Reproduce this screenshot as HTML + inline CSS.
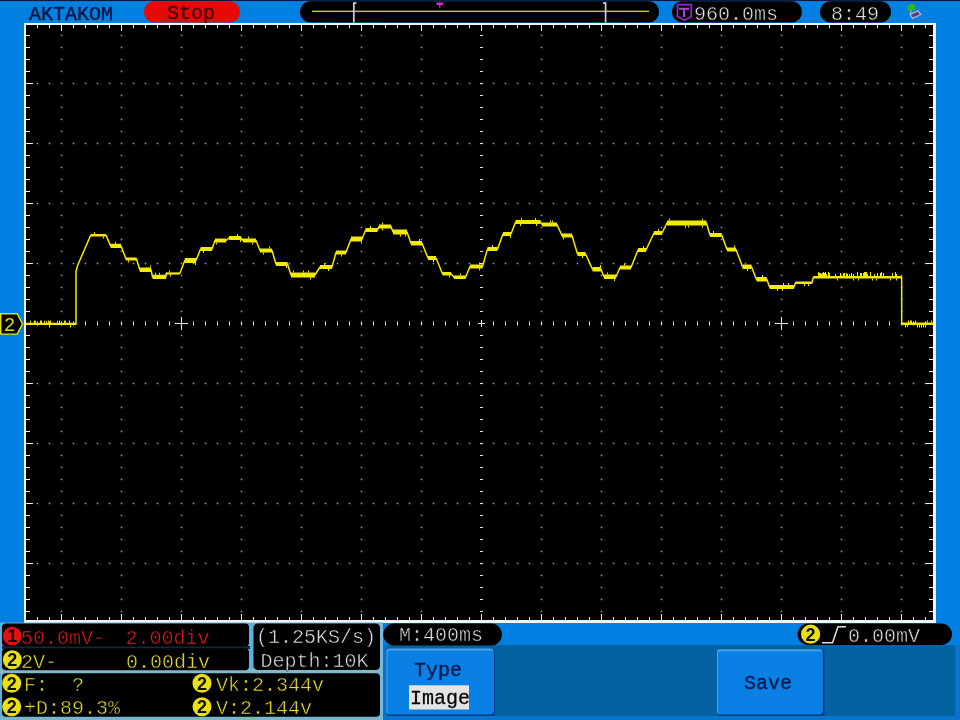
<!DOCTYPE html>
<html><head><meta charset="utf-8">
<style>
html,body{margin:0;padding:0;background:#0080e0;width:960px;height:720px;overflow:hidden}
svg{display:block;will-change:transform}
text{font-family:"Liberation Mono",monospace;font-size:20px;white-space:pre}
.n{font-family:"Liberation Sans",sans-serif;font-weight:bold;font-size:18px;text-anchor:middle;fill:#101000}
.k{stroke:#000;stroke-width:0.45}
</style></head><body>
<svg width="960" height="720" viewBox="0 0 960 720">
<rect x="0" y="0" width="960" height="720" fill="#0080e0"/>
<rect x="0" y="0" width="960" height="1.1" fill="#0a1a40"/>
<!-- top bar -->
<text x="29" y="20" fill="#04143c" stroke="#04143c" stroke-width="0.4">AKTAKOM</text>
<rect x="144" y="1.2" width="96" height="21.3" rx="10.6" fill="#e80808"/>
<text x="167" y="19" fill="#400000" stroke="#400000" stroke-width="0.4">Stop</text>
<rect x="300" y="1.2" width="359" height="21.3" rx="10.6" fill="#000"/>
<rect x="312" y="10.6" width="337" height="1.5" fill="#c4c430"/>
<path d="M353.8 22.5V3.2h2.6" fill="none" stroke="#d0cce0" stroke-width="1.7"/>
<path d="M605.6 22.5V3.2h-2.6" fill="none" stroke="#d0cce0" stroke-width="1.7"/>
<path d="M436.5 2.5h6.5v2.5h-2.5v2.5h-1.5v-2.5h-2.5z" fill="#d828d0"/>
<rect x="672" y="1.2" width="130" height="21.3" rx="10.6" fill="#000"/>
<path d="M677.5 4.6h13.8v12l-6.9 3.6l-6.9-3.6z" fill="none" stroke="#8830d0" stroke-width="1.7"/>
<path d="M679 7.8h10v1.9h-4v7.3h-2v-7.3h-4z" fill="#b040e0"/>
<text x="694" y="19.5" fill="#e4e4e4" class="k">960.0ms</text>
<rect x="820" y="1.2" width="71" height="21.3" rx="10.6" fill="#000"/>
<text x="831" y="19.5" fill="#e4e4e4" class="k">8:49</text>
<path d="M907 6.5Q909 3.5 913 4L916 6L914.5 9.5L911 11.5L908 10.5z" fill="#38b020"/>
<path d="M910.5 10.5L911.5 16" stroke="#90c8a8" stroke-width="1.2"/>
<path d="M910 14.3L918 10.8L920.8 14.5L912.5 18.3z" fill="#3a4a88" stroke="#c8a8c8" stroke-width="1.3"/>
<rect x="24" y="23" width="912" height="600" fill="#f4f4f4"/>
<rect x="26" y="25" width="907" height="595" fill="#000"/>
<path fill="#989898" d="M36.7 82.7h1.6v1.6h-1.6zM48.7 82.7h1.6v1.6h-1.6zM60.7 82.7h1.6v1.6h-1.6zM72.7 82.7h1.6v1.6h-1.6zM84.7 82.7h1.6v1.6h-1.6zM96.7 82.7h1.6v1.6h-1.6zM108.7 82.7h1.6v1.6h-1.6zM120.7 82.7h1.6v1.6h-1.6zM132.7 82.7h1.6v1.6h-1.6zM144.7 82.7h1.6v1.6h-1.6zM156.7 82.7h1.6v1.6h-1.6zM168.7 82.7h1.6v1.6h-1.6zM180.7 82.7h1.6v1.6h-1.6zM192.7 82.7h1.6v1.6h-1.6zM204.7 82.7h1.6v1.6h-1.6zM216.7 82.7h1.6v1.6h-1.6zM228.7 82.7h1.6v1.6h-1.6zM240.7 82.7h1.6v1.6h-1.6zM252.7 82.7h1.6v1.6h-1.6zM264.7 82.7h1.6v1.6h-1.6zM276.7 82.7h1.6v1.6h-1.6zM288.7 82.7h1.6v1.6h-1.6zM300.7 82.7h1.6v1.6h-1.6zM312.7 82.7h1.6v1.6h-1.6zM324.7 82.7h1.6v1.6h-1.6zM336.7 82.7h1.6v1.6h-1.6zM348.7 82.7h1.6v1.6h-1.6zM360.7 82.7h1.6v1.6h-1.6zM372.7 82.7h1.6v1.6h-1.6zM384.7 82.7h1.6v1.6h-1.6zM396.7 82.7h1.6v1.6h-1.6zM408.7 82.7h1.6v1.6h-1.6zM420.7 82.7h1.6v1.6h-1.6zM432.7 82.7h1.6v1.6h-1.6zM444.7 82.7h1.6v1.6h-1.6zM456.7 82.7h1.6v1.6h-1.6zM468.7 82.7h1.6v1.6h-1.6zM480.7 82.7h1.6v1.6h-1.6zM492.7 82.7h1.6v1.6h-1.6zM504.7 82.7h1.6v1.6h-1.6zM516.7 82.7h1.6v1.6h-1.6zM528.7 82.7h1.6v1.6h-1.6zM540.7 82.7h1.6v1.6h-1.6zM552.7 82.7h1.6v1.6h-1.6zM564.7 82.7h1.6v1.6h-1.6zM576.7 82.7h1.6v1.6h-1.6zM588.7 82.7h1.6v1.6h-1.6zM600.7 82.7h1.6v1.6h-1.6zM612.7 82.7h1.6v1.6h-1.6zM624.7 82.7h1.6v1.6h-1.6zM636.7 82.7h1.6v1.6h-1.6zM648.7 82.7h1.6v1.6h-1.6zM660.7 82.7h1.6v1.6h-1.6zM672.7 82.7h1.6v1.6h-1.6zM684.7 82.7h1.6v1.6h-1.6zM696.7 82.7h1.6v1.6h-1.6zM708.7 82.7h1.6v1.6h-1.6zM720.7 82.7h1.6v1.6h-1.6zM732.7 82.7h1.6v1.6h-1.6zM744.7 82.7h1.6v1.6h-1.6zM756.7 82.7h1.6v1.6h-1.6zM768.7 82.7h1.6v1.6h-1.6zM780.7 82.7h1.6v1.6h-1.6zM792.7 82.7h1.6v1.6h-1.6zM804.7 82.7h1.6v1.6h-1.6zM816.7 82.7h1.6v1.6h-1.6zM828.7 82.7h1.6v1.6h-1.6zM840.7 82.7h1.6v1.6h-1.6zM852.7 82.7h1.6v1.6h-1.6zM864.7 82.7h1.6v1.6h-1.6zM876.7 82.7h1.6v1.6h-1.6zM888.7 82.7h1.6v1.6h-1.6zM900.7 82.7h1.6v1.6h-1.6zM912.7 82.7h1.6v1.6h-1.6zM924.7 82.7h1.6v1.6h-1.6zM36.7 142.7h1.6v1.6h-1.6zM48.7 142.7h1.6v1.6h-1.6zM60.7 142.7h1.6v1.6h-1.6zM72.7 142.7h1.6v1.6h-1.6zM84.7 142.7h1.6v1.6h-1.6zM96.7 142.7h1.6v1.6h-1.6zM108.7 142.7h1.6v1.6h-1.6zM120.7 142.7h1.6v1.6h-1.6zM132.7 142.7h1.6v1.6h-1.6zM144.7 142.7h1.6v1.6h-1.6zM156.7 142.7h1.6v1.6h-1.6zM168.7 142.7h1.6v1.6h-1.6zM180.7 142.7h1.6v1.6h-1.6zM192.7 142.7h1.6v1.6h-1.6zM204.7 142.7h1.6v1.6h-1.6zM216.7 142.7h1.6v1.6h-1.6zM228.7 142.7h1.6v1.6h-1.6zM240.7 142.7h1.6v1.6h-1.6zM252.7 142.7h1.6v1.6h-1.6zM264.7 142.7h1.6v1.6h-1.6zM276.7 142.7h1.6v1.6h-1.6zM288.7 142.7h1.6v1.6h-1.6zM300.7 142.7h1.6v1.6h-1.6zM312.7 142.7h1.6v1.6h-1.6zM324.7 142.7h1.6v1.6h-1.6zM336.7 142.7h1.6v1.6h-1.6zM348.7 142.7h1.6v1.6h-1.6zM360.7 142.7h1.6v1.6h-1.6zM372.7 142.7h1.6v1.6h-1.6zM384.7 142.7h1.6v1.6h-1.6zM396.7 142.7h1.6v1.6h-1.6zM408.7 142.7h1.6v1.6h-1.6zM420.7 142.7h1.6v1.6h-1.6zM432.7 142.7h1.6v1.6h-1.6zM444.7 142.7h1.6v1.6h-1.6zM456.7 142.7h1.6v1.6h-1.6zM468.7 142.7h1.6v1.6h-1.6zM480.7 142.7h1.6v1.6h-1.6zM492.7 142.7h1.6v1.6h-1.6zM504.7 142.7h1.6v1.6h-1.6zM516.7 142.7h1.6v1.6h-1.6zM528.7 142.7h1.6v1.6h-1.6zM540.7 142.7h1.6v1.6h-1.6zM552.7 142.7h1.6v1.6h-1.6zM564.7 142.7h1.6v1.6h-1.6zM576.7 142.7h1.6v1.6h-1.6zM588.7 142.7h1.6v1.6h-1.6zM600.7 142.7h1.6v1.6h-1.6zM612.7 142.7h1.6v1.6h-1.6zM624.7 142.7h1.6v1.6h-1.6zM636.7 142.7h1.6v1.6h-1.6zM648.7 142.7h1.6v1.6h-1.6zM660.7 142.7h1.6v1.6h-1.6zM672.7 142.7h1.6v1.6h-1.6zM684.7 142.7h1.6v1.6h-1.6zM696.7 142.7h1.6v1.6h-1.6zM708.7 142.7h1.6v1.6h-1.6zM720.7 142.7h1.6v1.6h-1.6zM732.7 142.7h1.6v1.6h-1.6zM744.7 142.7h1.6v1.6h-1.6zM756.7 142.7h1.6v1.6h-1.6zM768.7 142.7h1.6v1.6h-1.6zM780.7 142.7h1.6v1.6h-1.6zM792.7 142.7h1.6v1.6h-1.6zM804.7 142.7h1.6v1.6h-1.6zM816.7 142.7h1.6v1.6h-1.6zM828.7 142.7h1.6v1.6h-1.6zM840.7 142.7h1.6v1.6h-1.6zM852.7 142.7h1.6v1.6h-1.6zM864.7 142.7h1.6v1.6h-1.6zM876.7 142.7h1.6v1.6h-1.6zM888.7 142.7h1.6v1.6h-1.6zM900.7 142.7h1.6v1.6h-1.6zM912.7 142.7h1.6v1.6h-1.6zM924.7 142.7h1.6v1.6h-1.6zM36.7 202.7h1.6v1.6h-1.6zM48.7 202.7h1.6v1.6h-1.6zM60.7 202.7h1.6v1.6h-1.6zM72.7 202.7h1.6v1.6h-1.6zM84.7 202.7h1.6v1.6h-1.6zM96.7 202.7h1.6v1.6h-1.6zM108.7 202.7h1.6v1.6h-1.6zM120.7 202.7h1.6v1.6h-1.6zM132.7 202.7h1.6v1.6h-1.6zM144.7 202.7h1.6v1.6h-1.6zM156.7 202.7h1.6v1.6h-1.6zM168.7 202.7h1.6v1.6h-1.6zM180.7 202.7h1.6v1.6h-1.6zM192.7 202.7h1.6v1.6h-1.6zM204.7 202.7h1.6v1.6h-1.6zM216.7 202.7h1.6v1.6h-1.6zM228.7 202.7h1.6v1.6h-1.6zM240.7 202.7h1.6v1.6h-1.6zM252.7 202.7h1.6v1.6h-1.6zM264.7 202.7h1.6v1.6h-1.6zM276.7 202.7h1.6v1.6h-1.6zM288.7 202.7h1.6v1.6h-1.6zM300.7 202.7h1.6v1.6h-1.6zM312.7 202.7h1.6v1.6h-1.6zM324.7 202.7h1.6v1.6h-1.6zM336.7 202.7h1.6v1.6h-1.6zM348.7 202.7h1.6v1.6h-1.6zM360.7 202.7h1.6v1.6h-1.6zM372.7 202.7h1.6v1.6h-1.6zM384.7 202.7h1.6v1.6h-1.6zM396.7 202.7h1.6v1.6h-1.6zM408.7 202.7h1.6v1.6h-1.6zM420.7 202.7h1.6v1.6h-1.6zM432.7 202.7h1.6v1.6h-1.6zM444.7 202.7h1.6v1.6h-1.6zM456.7 202.7h1.6v1.6h-1.6zM468.7 202.7h1.6v1.6h-1.6zM480.7 202.7h1.6v1.6h-1.6zM492.7 202.7h1.6v1.6h-1.6zM504.7 202.7h1.6v1.6h-1.6zM516.7 202.7h1.6v1.6h-1.6zM528.7 202.7h1.6v1.6h-1.6zM540.7 202.7h1.6v1.6h-1.6zM552.7 202.7h1.6v1.6h-1.6zM564.7 202.7h1.6v1.6h-1.6zM576.7 202.7h1.6v1.6h-1.6zM588.7 202.7h1.6v1.6h-1.6zM600.7 202.7h1.6v1.6h-1.6zM612.7 202.7h1.6v1.6h-1.6zM624.7 202.7h1.6v1.6h-1.6zM636.7 202.7h1.6v1.6h-1.6zM648.7 202.7h1.6v1.6h-1.6zM660.7 202.7h1.6v1.6h-1.6zM672.7 202.7h1.6v1.6h-1.6zM684.7 202.7h1.6v1.6h-1.6zM696.7 202.7h1.6v1.6h-1.6zM708.7 202.7h1.6v1.6h-1.6zM720.7 202.7h1.6v1.6h-1.6zM732.7 202.7h1.6v1.6h-1.6zM744.7 202.7h1.6v1.6h-1.6zM756.7 202.7h1.6v1.6h-1.6zM768.7 202.7h1.6v1.6h-1.6zM780.7 202.7h1.6v1.6h-1.6zM792.7 202.7h1.6v1.6h-1.6zM804.7 202.7h1.6v1.6h-1.6zM816.7 202.7h1.6v1.6h-1.6zM828.7 202.7h1.6v1.6h-1.6zM840.7 202.7h1.6v1.6h-1.6zM852.7 202.7h1.6v1.6h-1.6zM864.7 202.7h1.6v1.6h-1.6zM876.7 202.7h1.6v1.6h-1.6zM888.7 202.7h1.6v1.6h-1.6zM900.7 202.7h1.6v1.6h-1.6zM912.7 202.7h1.6v1.6h-1.6zM924.7 202.7h1.6v1.6h-1.6zM36.7 262.7h1.6v1.6h-1.6zM48.7 262.7h1.6v1.6h-1.6zM60.7 262.7h1.6v1.6h-1.6zM72.7 262.7h1.6v1.6h-1.6zM84.7 262.7h1.6v1.6h-1.6zM96.7 262.7h1.6v1.6h-1.6zM108.7 262.7h1.6v1.6h-1.6zM120.7 262.7h1.6v1.6h-1.6zM132.7 262.7h1.6v1.6h-1.6zM144.7 262.7h1.6v1.6h-1.6zM156.7 262.7h1.6v1.6h-1.6zM168.7 262.7h1.6v1.6h-1.6zM180.7 262.7h1.6v1.6h-1.6zM192.7 262.7h1.6v1.6h-1.6zM204.7 262.7h1.6v1.6h-1.6zM216.7 262.7h1.6v1.6h-1.6zM228.7 262.7h1.6v1.6h-1.6zM240.7 262.7h1.6v1.6h-1.6zM252.7 262.7h1.6v1.6h-1.6zM264.7 262.7h1.6v1.6h-1.6zM276.7 262.7h1.6v1.6h-1.6zM288.7 262.7h1.6v1.6h-1.6zM300.7 262.7h1.6v1.6h-1.6zM312.7 262.7h1.6v1.6h-1.6zM324.7 262.7h1.6v1.6h-1.6zM336.7 262.7h1.6v1.6h-1.6zM348.7 262.7h1.6v1.6h-1.6zM360.7 262.7h1.6v1.6h-1.6zM372.7 262.7h1.6v1.6h-1.6zM384.7 262.7h1.6v1.6h-1.6zM396.7 262.7h1.6v1.6h-1.6zM408.7 262.7h1.6v1.6h-1.6zM420.7 262.7h1.6v1.6h-1.6zM432.7 262.7h1.6v1.6h-1.6zM444.7 262.7h1.6v1.6h-1.6zM456.7 262.7h1.6v1.6h-1.6zM468.7 262.7h1.6v1.6h-1.6zM480.7 262.7h1.6v1.6h-1.6zM492.7 262.7h1.6v1.6h-1.6zM504.7 262.7h1.6v1.6h-1.6zM516.7 262.7h1.6v1.6h-1.6zM528.7 262.7h1.6v1.6h-1.6zM540.7 262.7h1.6v1.6h-1.6zM552.7 262.7h1.6v1.6h-1.6zM564.7 262.7h1.6v1.6h-1.6zM576.7 262.7h1.6v1.6h-1.6zM588.7 262.7h1.6v1.6h-1.6zM600.7 262.7h1.6v1.6h-1.6zM612.7 262.7h1.6v1.6h-1.6zM624.7 262.7h1.6v1.6h-1.6zM636.7 262.7h1.6v1.6h-1.6zM648.7 262.7h1.6v1.6h-1.6zM660.7 262.7h1.6v1.6h-1.6zM672.7 262.7h1.6v1.6h-1.6zM684.7 262.7h1.6v1.6h-1.6zM696.7 262.7h1.6v1.6h-1.6zM708.7 262.7h1.6v1.6h-1.6zM720.7 262.7h1.6v1.6h-1.6zM732.7 262.7h1.6v1.6h-1.6zM744.7 262.7h1.6v1.6h-1.6zM756.7 262.7h1.6v1.6h-1.6zM768.7 262.7h1.6v1.6h-1.6zM780.7 262.7h1.6v1.6h-1.6zM792.7 262.7h1.6v1.6h-1.6zM804.7 262.7h1.6v1.6h-1.6zM816.7 262.7h1.6v1.6h-1.6zM828.7 262.7h1.6v1.6h-1.6zM840.7 262.7h1.6v1.6h-1.6zM852.7 262.7h1.6v1.6h-1.6zM864.7 262.7h1.6v1.6h-1.6zM876.7 262.7h1.6v1.6h-1.6zM888.7 262.7h1.6v1.6h-1.6zM900.7 262.7h1.6v1.6h-1.6zM912.7 262.7h1.6v1.6h-1.6zM924.7 262.7h1.6v1.6h-1.6zM36.7 382.7h1.6v1.6h-1.6zM48.7 382.7h1.6v1.6h-1.6zM60.7 382.7h1.6v1.6h-1.6zM72.7 382.7h1.6v1.6h-1.6zM84.7 382.7h1.6v1.6h-1.6zM96.7 382.7h1.6v1.6h-1.6zM108.7 382.7h1.6v1.6h-1.6zM120.7 382.7h1.6v1.6h-1.6zM132.7 382.7h1.6v1.6h-1.6zM144.7 382.7h1.6v1.6h-1.6zM156.7 382.7h1.6v1.6h-1.6zM168.7 382.7h1.6v1.6h-1.6zM180.7 382.7h1.6v1.6h-1.6zM192.7 382.7h1.6v1.6h-1.6zM204.7 382.7h1.6v1.6h-1.6zM216.7 382.7h1.6v1.6h-1.6zM228.7 382.7h1.6v1.6h-1.6zM240.7 382.7h1.6v1.6h-1.6zM252.7 382.7h1.6v1.6h-1.6zM264.7 382.7h1.6v1.6h-1.6zM276.7 382.7h1.6v1.6h-1.6zM288.7 382.7h1.6v1.6h-1.6zM300.7 382.7h1.6v1.6h-1.6zM312.7 382.7h1.6v1.6h-1.6zM324.7 382.7h1.6v1.6h-1.6zM336.7 382.7h1.6v1.6h-1.6zM348.7 382.7h1.6v1.6h-1.6zM360.7 382.7h1.6v1.6h-1.6zM372.7 382.7h1.6v1.6h-1.6zM384.7 382.7h1.6v1.6h-1.6zM396.7 382.7h1.6v1.6h-1.6zM408.7 382.7h1.6v1.6h-1.6zM420.7 382.7h1.6v1.6h-1.6zM432.7 382.7h1.6v1.6h-1.6zM444.7 382.7h1.6v1.6h-1.6zM456.7 382.7h1.6v1.6h-1.6zM468.7 382.7h1.6v1.6h-1.6zM480.7 382.7h1.6v1.6h-1.6zM492.7 382.7h1.6v1.6h-1.6zM504.7 382.7h1.6v1.6h-1.6zM516.7 382.7h1.6v1.6h-1.6zM528.7 382.7h1.6v1.6h-1.6zM540.7 382.7h1.6v1.6h-1.6zM552.7 382.7h1.6v1.6h-1.6zM564.7 382.7h1.6v1.6h-1.6zM576.7 382.7h1.6v1.6h-1.6zM588.7 382.7h1.6v1.6h-1.6zM600.7 382.7h1.6v1.6h-1.6zM612.7 382.7h1.6v1.6h-1.6zM624.7 382.7h1.6v1.6h-1.6zM636.7 382.7h1.6v1.6h-1.6zM648.7 382.7h1.6v1.6h-1.6zM660.7 382.7h1.6v1.6h-1.6zM672.7 382.7h1.6v1.6h-1.6zM684.7 382.7h1.6v1.6h-1.6zM696.7 382.7h1.6v1.6h-1.6zM708.7 382.7h1.6v1.6h-1.6zM720.7 382.7h1.6v1.6h-1.6zM732.7 382.7h1.6v1.6h-1.6zM744.7 382.7h1.6v1.6h-1.6zM756.7 382.7h1.6v1.6h-1.6zM768.7 382.7h1.6v1.6h-1.6zM780.7 382.7h1.6v1.6h-1.6zM792.7 382.7h1.6v1.6h-1.6zM804.7 382.7h1.6v1.6h-1.6zM816.7 382.7h1.6v1.6h-1.6zM828.7 382.7h1.6v1.6h-1.6zM840.7 382.7h1.6v1.6h-1.6zM852.7 382.7h1.6v1.6h-1.6zM864.7 382.7h1.6v1.6h-1.6zM876.7 382.7h1.6v1.6h-1.6zM888.7 382.7h1.6v1.6h-1.6zM900.7 382.7h1.6v1.6h-1.6zM912.7 382.7h1.6v1.6h-1.6zM924.7 382.7h1.6v1.6h-1.6zM36.7 442.7h1.6v1.6h-1.6zM48.7 442.7h1.6v1.6h-1.6zM60.7 442.7h1.6v1.6h-1.6zM72.7 442.7h1.6v1.6h-1.6zM84.7 442.7h1.6v1.6h-1.6zM96.7 442.7h1.6v1.6h-1.6zM108.7 442.7h1.6v1.6h-1.6zM120.7 442.7h1.6v1.6h-1.6zM132.7 442.7h1.6v1.6h-1.6zM144.7 442.7h1.6v1.6h-1.6zM156.7 442.7h1.6v1.6h-1.6zM168.7 442.7h1.6v1.6h-1.6zM180.7 442.7h1.6v1.6h-1.6zM192.7 442.7h1.6v1.6h-1.6zM204.7 442.7h1.6v1.6h-1.6zM216.7 442.7h1.6v1.6h-1.6zM228.7 442.7h1.6v1.6h-1.6zM240.7 442.7h1.6v1.6h-1.6zM252.7 442.7h1.6v1.6h-1.6zM264.7 442.7h1.6v1.6h-1.6zM276.7 442.7h1.6v1.6h-1.6zM288.7 442.7h1.6v1.6h-1.6zM300.7 442.7h1.6v1.6h-1.6zM312.7 442.7h1.6v1.6h-1.6zM324.7 442.7h1.6v1.6h-1.6zM336.7 442.7h1.6v1.6h-1.6zM348.7 442.7h1.6v1.6h-1.6zM360.7 442.7h1.6v1.6h-1.6zM372.7 442.7h1.6v1.6h-1.6zM384.7 442.7h1.6v1.6h-1.6zM396.7 442.7h1.6v1.6h-1.6zM408.7 442.7h1.6v1.6h-1.6zM420.7 442.7h1.6v1.6h-1.6zM432.7 442.7h1.6v1.6h-1.6zM444.7 442.7h1.6v1.6h-1.6zM456.7 442.7h1.6v1.6h-1.6zM468.7 442.7h1.6v1.6h-1.6zM480.7 442.7h1.6v1.6h-1.6zM492.7 442.7h1.6v1.6h-1.6zM504.7 442.7h1.6v1.6h-1.6zM516.7 442.7h1.6v1.6h-1.6zM528.7 442.7h1.6v1.6h-1.6zM540.7 442.7h1.6v1.6h-1.6zM552.7 442.7h1.6v1.6h-1.6zM564.7 442.7h1.6v1.6h-1.6zM576.7 442.7h1.6v1.6h-1.6zM588.7 442.7h1.6v1.6h-1.6zM600.7 442.7h1.6v1.6h-1.6zM612.7 442.7h1.6v1.6h-1.6zM624.7 442.7h1.6v1.6h-1.6zM636.7 442.7h1.6v1.6h-1.6zM648.7 442.7h1.6v1.6h-1.6zM660.7 442.7h1.6v1.6h-1.6zM672.7 442.7h1.6v1.6h-1.6zM684.7 442.7h1.6v1.6h-1.6zM696.7 442.7h1.6v1.6h-1.6zM708.7 442.7h1.6v1.6h-1.6zM720.7 442.7h1.6v1.6h-1.6zM732.7 442.7h1.6v1.6h-1.6zM744.7 442.7h1.6v1.6h-1.6zM756.7 442.7h1.6v1.6h-1.6zM768.7 442.7h1.6v1.6h-1.6zM780.7 442.7h1.6v1.6h-1.6zM792.7 442.7h1.6v1.6h-1.6zM804.7 442.7h1.6v1.6h-1.6zM816.7 442.7h1.6v1.6h-1.6zM828.7 442.7h1.6v1.6h-1.6zM840.7 442.7h1.6v1.6h-1.6zM852.7 442.7h1.6v1.6h-1.6zM864.7 442.7h1.6v1.6h-1.6zM876.7 442.7h1.6v1.6h-1.6zM888.7 442.7h1.6v1.6h-1.6zM900.7 442.7h1.6v1.6h-1.6zM912.7 442.7h1.6v1.6h-1.6zM924.7 442.7h1.6v1.6h-1.6zM36.7 502.7h1.6v1.6h-1.6zM48.7 502.7h1.6v1.6h-1.6zM60.7 502.7h1.6v1.6h-1.6zM72.7 502.7h1.6v1.6h-1.6zM84.7 502.7h1.6v1.6h-1.6zM96.7 502.7h1.6v1.6h-1.6zM108.7 502.7h1.6v1.6h-1.6zM120.7 502.7h1.6v1.6h-1.6zM132.7 502.7h1.6v1.6h-1.6zM144.7 502.7h1.6v1.6h-1.6zM156.7 502.7h1.6v1.6h-1.6zM168.7 502.7h1.6v1.6h-1.6zM180.7 502.7h1.6v1.6h-1.6zM192.7 502.7h1.6v1.6h-1.6zM204.7 502.7h1.6v1.6h-1.6zM216.7 502.7h1.6v1.6h-1.6zM228.7 502.7h1.6v1.6h-1.6zM240.7 502.7h1.6v1.6h-1.6zM252.7 502.7h1.6v1.6h-1.6zM264.7 502.7h1.6v1.6h-1.6zM276.7 502.7h1.6v1.6h-1.6zM288.7 502.7h1.6v1.6h-1.6zM300.7 502.7h1.6v1.6h-1.6zM312.7 502.7h1.6v1.6h-1.6zM324.7 502.7h1.6v1.6h-1.6zM336.7 502.7h1.6v1.6h-1.6zM348.7 502.7h1.6v1.6h-1.6zM360.7 502.7h1.6v1.6h-1.6zM372.7 502.7h1.6v1.6h-1.6zM384.7 502.7h1.6v1.6h-1.6zM396.7 502.7h1.6v1.6h-1.6zM408.7 502.7h1.6v1.6h-1.6zM420.7 502.7h1.6v1.6h-1.6zM432.7 502.7h1.6v1.6h-1.6zM444.7 502.7h1.6v1.6h-1.6zM456.7 502.7h1.6v1.6h-1.6zM468.7 502.7h1.6v1.6h-1.6zM480.7 502.7h1.6v1.6h-1.6zM492.7 502.7h1.6v1.6h-1.6zM504.7 502.7h1.6v1.6h-1.6zM516.7 502.7h1.6v1.6h-1.6zM528.7 502.7h1.6v1.6h-1.6zM540.7 502.7h1.6v1.6h-1.6zM552.7 502.7h1.6v1.6h-1.6zM564.7 502.7h1.6v1.6h-1.6zM576.7 502.7h1.6v1.6h-1.6zM588.7 502.7h1.6v1.6h-1.6zM600.7 502.7h1.6v1.6h-1.6zM612.7 502.7h1.6v1.6h-1.6zM624.7 502.7h1.6v1.6h-1.6zM636.7 502.7h1.6v1.6h-1.6zM648.7 502.7h1.6v1.6h-1.6zM660.7 502.7h1.6v1.6h-1.6zM672.7 502.7h1.6v1.6h-1.6zM684.7 502.7h1.6v1.6h-1.6zM696.7 502.7h1.6v1.6h-1.6zM708.7 502.7h1.6v1.6h-1.6zM720.7 502.7h1.6v1.6h-1.6zM732.7 502.7h1.6v1.6h-1.6zM744.7 502.7h1.6v1.6h-1.6zM756.7 502.7h1.6v1.6h-1.6zM768.7 502.7h1.6v1.6h-1.6zM780.7 502.7h1.6v1.6h-1.6zM792.7 502.7h1.6v1.6h-1.6zM804.7 502.7h1.6v1.6h-1.6zM816.7 502.7h1.6v1.6h-1.6zM828.7 502.7h1.6v1.6h-1.6zM840.7 502.7h1.6v1.6h-1.6zM852.7 502.7h1.6v1.6h-1.6zM864.7 502.7h1.6v1.6h-1.6zM876.7 502.7h1.6v1.6h-1.6zM888.7 502.7h1.6v1.6h-1.6zM900.7 502.7h1.6v1.6h-1.6zM912.7 502.7h1.6v1.6h-1.6zM924.7 502.7h1.6v1.6h-1.6zM36.7 562.7h1.6v1.6h-1.6zM48.7 562.7h1.6v1.6h-1.6zM60.7 562.7h1.6v1.6h-1.6zM72.7 562.7h1.6v1.6h-1.6zM84.7 562.7h1.6v1.6h-1.6zM96.7 562.7h1.6v1.6h-1.6zM108.7 562.7h1.6v1.6h-1.6zM120.7 562.7h1.6v1.6h-1.6zM132.7 562.7h1.6v1.6h-1.6zM144.7 562.7h1.6v1.6h-1.6zM156.7 562.7h1.6v1.6h-1.6zM168.7 562.7h1.6v1.6h-1.6zM180.7 562.7h1.6v1.6h-1.6zM192.7 562.7h1.6v1.6h-1.6zM204.7 562.7h1.6v1.6h-1.6zM216.7 562.7h1.6v1.6h-1.6zM228.7 562.7h1.6v1.6h-1.6zM240.7 562.7h1.6v1.6h-1.6zM252.7 562.7h1.6v1.6h-1.6zM264.7 562.7h1.6v1.6h-1.6zM276.7 562.7h1.6v1.6h-1.6zM288.7 562.7h1.6v1.6h-1.6zM300.7 562.7h1.6v1.6h-1.6zM312.7 562.7h1.6v1.6h-1.6zM324.7 562.7h1.6v1.6h-1.6zM336.7 562.7h1.6v1.6h-1.6zM348.7 562.7h1.6v1.6h-1.6zM360.7 562.7h1.6v1.6h-1.6zM372.7 562.7h1.6v1.6h-1.6zM384.7 562.7h1.6v1.6h-1.6zM396.7 562.7h1.6v1.6h-1.6zM408.7 562.7h1.6v1.6h-1.6zM420.7 562.7h1.6v1.6h-1.6zM432.7 562.7h1.6v1.6h-1.6zM444.7 562.7h1.6v1.6h-1.6zM456.7 562.7h1.6v1.6h-1.6zM468.7 562.7h1.6v1.6h-1.6zM480.7 562.7h1.6v1.6h-1.6zM492.7 562.7h1.6v1.6h-1.6zM504.7 562.7h1.6v1.6h-1.6zM516.7 562.7h1.6v1.6h-1.6zM528.7 562.7h1.6v1.6h-1.6zM540.7 562.7h1.6v1.6h-1.6zM552.7 562.7h1.6v1.6h-1.6zM564.7 562.7h1.6v1.6h-1.6zM576.7 562.7h1.6v1.6h-1.6zM588.7 562.7h1.6v1.6h-1.6zM600.7 562.7h1.6v1.6h-1.6zM612.7 562.7h1.6v1.6h-1.6zM624.7 562.7h1.6v1.6h-1.6zM636.7 562.7h1.6v1.6h-1.6zM648.7 562.7h1.6v1.6h-1.6zM660.7 562.7h1.6v1.6h-1.6zM672.7 562.7h1.6v1.6h-1.6zM684.7 562.7h1.6v1.6h-1.6zM696.7 562.7h1.6v1.6h-1.6zM708.7 562.7h1.6v1.6h-1.6zM720.7 562.7h1.6v1.6h-1.6zM732.7 562.7h1.6v1.6h-1.6zM744.7 562.7h1.6v1.6h-1.6zM756.7 562.7h1.6v1.6h-1.6zM768.7 562.7h1.6v1.6h-1.6zM780.7 562.7h1.6v1.6h-1.6zM792.7 562.7h1.6v1.6h-1.6zM804.7 562.7h1.6v1.6h-1.6zM816.7 562.7h1.6v1.6h-1.6zM828.7 562.7h1.6v1.6h-1.6zM840.7 562.7h1.6v1.6h-1.6zM852.7 562.7h1.6v1.6h-1.6zM864.7 562.7h1.6v1.6h-1.6zM876.7 562.7h1.6v1.6h-1.6zM888.7 562.7h1.6v1.6h-1.6zM900.7 562.7h1.6v1.6h-1.6zM912.7 562.7h1.6v1.6h-1.6zM924.7 562.7h1.6v1.6h-1.6zM60.7 34.7h1.6v1.6h-1.6zM60.7 46.7h1.6v1.6h-1.6zM60.7 58.7h1.6v1.6h-1.6zM60.7 70.7h1.6v1.6h-1.6zM60.7 82.7h1.6v1.6h-1.6zM60.7 94.7h1.6v1.6h-1.6zM60.7 106.7h1.6v1.6h-1.6zM60.7 118.7h1.6v1.6h-1.6zM60.7 130.7h1.6v1.6h-1.6zM60.7 142.7h1.6v1.6h-1.6zM60.7 154.7h1.6v1.6h-1.6zM60.7 166.7h1.6v1.6h-1.6zM60.7 178.7h1.6v1.6h-1.6zM60.7 190.7h1.6v1.6h-1.6zM60.7 202.7h1.6v1.6h-1.6zM60.7 214.7h1.6v1.6h-1.6zM60.7 226.7h1.6v1.6h-1.6zM60.7 238.7h1.6v1.6h-1.6zM60.7 250.7h1.6v1.6h-1.6zM60.7 262.7h1.6v1.6h-1.6zM60.7 274.7h1.6v1.6h-1.6zM60.7 286.7h1.6v1.6h-1.6zM60.7 298.7h1.6v1.6h-1.6zM60.7 310.7h1.6v1.6h-1.6zM60.7 322.7h1.6v1.6h-1.6zM60.7 334.7h1.6v1.6h-1.6zM60.7 346.7h1.6v1.6h-1.6zM60.7 358.7h1.6v1.6h-1.6zM60.7 370.7h1.6v1.6h-1.6zM60.7 382.7h1.6v1.6h-1.6zM60.7 394.7h1.6v1.6h-1.6zM60.7 406.7h1.6v1.6h-1.6zM60.7 418.7h1.6v1.6h-1.6zM60.7 430.7h1.6v1.6h-1.6zM60.7 442.7h1.6v1.6h-1.6zM60.7 454.7h1.6v1.6h-1.6zM60.7 466.7h1.6v1.6h-1.6zM60.7 478.7h1.6v1.6h-1.6zM60.7 490.7h1.6v1.6h-1.6zM60.7 502.7h1.6v1.6h-1.6zM60.7 514.7h1.6v1.6h-1.6zM60.7 526.7h1.6v1.6h-1.6zM60.7 538.7h1.6v1.6h-1.6zM60.7 550.7h1.6v1.6h-1.6zM60.7 562.7h1.6v1.6h-1.6zM60.7 574.7h1.6v1.6h-1.6zM60.7 586.7h1.6v1.6h-1.6zM60.7 598.7h1.6v1.6h-1.6zM60.7 610.7h1.6v1.6h-1.6zM120.7 34.7h1.6v1.6h-1.6zM120.7 46.7h1.6v1.6h-1.6zM120.7 58.7h1.6v1.6h-1.6zM120.7 70.7h1.6v1.6h-1.6zM120.7 82.7h1.6v1.6h-1.6zM120.7 94.7h1.6v1.6h-1.6zM120.7 106.7h1.6v1.6h-1.6zM120.7 118.7h1.6v1.6h-1.6zM120.7 130.7h1.6v1.6h-1.6zM120.7 142.7h1.6v1.6h-1.6zM120.7 154.7h1.6v1.6h-1.6zM120.7 166.7h1.6v1.6h-1.6zM120.7 178.7h1.6v1.6h-1.6zM120.7 190.7h1.6v1.6h-1.6zM120.7 202.7h1.6v1.6h-1.6zM120.7 214.7h1.6v1.6h-1.6zM120.7 226.7h1.6v1.6h-1.6zM120.7 238.7h1.6v1.6h-1.6zM120.7 250.7h1.6v1.6h-1.6zM120.7 262.7h1.6v1.6h-1.6zM120.7 274.7h1.6v1.6h-1.6zM120.7 286.7h1.6v1.6h-1.6zM120.7 298.7h1.6v1.6h-1.6zM120.7 310.7h1.6v1.6h-1.6zM120.7 322.7h1.6v1.6h-1.6zM120.7 334.7h1.6v1.6h-1.6zM120.7 346.7h1.6v1.6h-1.6zM120.7 358.7h1.6v1.6h-1.6zM120.7 370.7h1.6v1.6h-1.6zM120.7 382.7h1.6v1.6h-1.6zM120.7 394.7h1.6v1.6h-1.6zM120.7 406.7h1.6v1.6h-1.6zM120.7 418.7h1.6v1.6h-1.6zM120.7 430.7h1.6v1.6h-1.6zM120.7 442.7h1.6v1.6h-1.6zM120.7 454.7h1.6v1.6h-1.6zM120.7 466.7h1.6v1.6h-1.6zM120.7 478.7h1.6v1.6h-1.6zM120.7 490.7h1.6v1.6h-1.6zM120.7 502.7h1.6v1.6h-1.6zM120.7 514.7h1.6v1.6h-1.6zM120.7 526.7h1.6v1.6h-1.6zM120.7 538.7h1.6v1.6h-1.6zM120.7 550.7h1.6v1.6h-1.6zM120.7 562.7h1.6v1.6h-1.6zM120.7 574.7h1.6v1.6h-1.6zM120.7 586.7h1.6v1.6h-1.6zM120.7 598.7h1.6v1.6h-1.6zM120.7 610.7h1.6v1.6h-1.6zM180.7 34.7h1.6v1.6h-1.6zM180.7 46.7h1.6v1.6h-1.6zM180.7 58.7h1.6v1.6h-1.6zM180.7 70.7h1.6v1.6h-1.6zM180.7 82.7h1.6v1.6h-1.6zM180.7 94.7h1.6v1.6h-1.6zM180.7 106.7h1.6v1.6h-1.6zM180.7 118.7h1.6v1.6h-1.6zM180.7 130.7h1.6v1.6h-1.6zM180.7 142.7h1.6v1.6h-1.6zM180.7 154.7h1.6v1.6h-1.6zM180.7 166.7h1.6v1.6h-1.6zM180.7 178.7h1.6v1.6h-1.6zM180.7 190.7h1.6v1.6h-1.6zM180.7 202.7h1.6v1.6h-1.6zM180.7 214.7h1.6v1.6h-1.6zM180.7 226.7h1.6v1.6h-1.6zM180.7 238.7h1.6v1.6h-1.6zM180.7 250.7h1.6v1.6h-1.6zM180.7 262.7h1.6v1.6h-1.6zM180.7 274.7h1.6v1.6h-1.6zM180.7 286.7h1.6v1.6h-1.6zM180.7 298.7h1.6v1.6h-1.6zM180.7 310.7h1.6v1.6h-1.6zM180.7 322.7h1.6v1.6h-1.6zM180.7 334.7h1.6v1.6h-1.6zM180.7 346.7h1.6v1.6h-1.6zM180.7 358.7h1.6v1.6h-1.6zM180.7 370.7h1.6v1.6h-1.6zM180.7 382.7h1.6v1.6h-1.6zM180.7 394.7h1.6v1.6h-1.6zM180.7 406.7h1.6v1.6h-1.6zM180.7 418.7h1.6v1.6h-1.6zM180.7 430.7h1.6v1.6h-1.6zM180.7 442.7h1.6v1.6h-1.6zM180.7 454.7h1.6v1.6h-1.6zM180.7 466.7h1.6v1.6h-1.6zM180.7 478.7h1.6v1.6h-1.6zM180.7 490.7h1.6v1.6h-1.6zM180.7 502.7h1.6v1.6h-1.6zM180.7 514.7h1.6v1.6h-1.6zM180.7 526.7h1.6v1.6h-1.6zM180.7 538.7h1.6v1.6h-1.6zM180.7 550.7h1.6v1.6h-1.6zM180.7 562.7h1.6v1.6h-1.6zM180.7 574.7h1.6v1.6h-1.6zM180.7 586.7h1.6v1.6h-1.6zM180.7 598.7h1.6v1.6h-1.6zM180.7 610.7h1.6v1.6h-1.6zM240.7 34.7h1.6v1.6h-1.6zM240.7 46.7h1.6v1.6h-1.6zM240.7 58.7h1.6v1.6h-1.6zM240.7 70.7h1.6v1.6h-1.6zM240.7 82.7h1.6v1.6h-1.6zM240.7 94.7h1.6v1.6h-1.6zM240.7 106.7h1.6v1.6h-1.6zM240.7 118.7h1.6v1.6h-1.6zM240.7 130.7h1.6v1.6h-1.6zM240.7 142.7h1.6v1.6h-1.6zM240.7 154.7h1.6v1.6h-1.6zM240.7 166.7h1.6v1.6h-1.6zM240.7 178.7h1.6v1.6h-1.6zM240.7 190.7h1.6v1.6h-1.6zM240.7 202.7h1.6v1.6h-1.6zM240.7 214.7h1.6v1.6h-1.6zM240.7 226.7h1.6v1.6h-1.6zM240.7 238.7h1.6v1.6h-1.6zM240.7 250.7h1.6v1.6h-1.6zM240.7 262.7h1.6v1.6h-1.6zM240.7 274.7h1.6v1.6h-1.6zM240.7 286.7h1.6v1.6h-1.6zM240.7 298.7h1.6v1.6h-1.6zM240.7 310.7h1.6v1.6h-1.6zM240.7 322.7h1.6v1.6h-1.6zM240.7 334.7h1.6v1.6h-1.6zM240.7 346.7h1.6v1.6h-1.6zM240.7 358.7h1.6v1.6h-1.6zM240.7 370.7h1.6v1.6h-1.6zM240.7 382.7h1.6v1.6h-1.6zM240.7 394.7h1.6v1.6h-1.6zM240.7 406.7h1.6v1.6h-1.6zM240.7 418.7h1.6v1.6h-1.6zM240.7 430.7h1.6v1.6h-1.6zM240.7 442.7h1.6v1.6h-1.6zM240.7 454.7h1.6v1.6h-1.6zM240.7 466.7h1.6v1.6h-1.6zM240.7 478.7h1.6v1.6h-1.6zM240.7 490.7h1.6v1.6h-1.6zM240.7 502.7h1.6v1.6h-1.6zM240.7 514.7h1.6v1.6h-1.6zM240.7 526.7h1.6v1.6h-1.6zM240.7 538.7h1.6v1.6h-1.6zM240.7 550.7h1.6v1.6h-1.6zM240.7 562.7h1.6v1.6h-1.6zM240.7 574.7h1.6v1.6h-1.6zM240.7 586.7h1.6v1.6h-1.6zM240.7 598.7h1.6v1.6h-1.6zM240.7 610.7h1.6v1.6h-1.6zM300.7 34.7h1.6v1.6h-1.6zM300.7 46.7h1.6v1.6h-1.6zM300.7 58.7h1.6v1.6h-1.6zM300.7 70.7h1.6v1.6h-1.6zM300.7 82.7h1.6v1.6h-1.6zM300.7 94.7h1.6v1.6h-1.6zM300.7 106.7h1.6v1.6h-1.6zM300.7 118.7h1.6v1.6h-1.6zM300.7 130.7h1.6v1.6h-1.6zM300.7 142.7h1.6v1.6h-1.6zM300.7 154.7h1.6v1.6h-1.6zM300.7 166.7h1.6v1.6h-1.6zM300.7 178.7h1.6v1.6h-1.6zM300.7 190.7h1.6v1.6h-1.6zM300.7 202.7h1.6v1.6h-1.6zM300.7 214.7h1.6v1.6h-1.6zM300.7 226.7h1.6v1.6h-1.6zM300.7 238.7h1.6v1.6h-1.6zM300.7 250.7h1.6v1.6h-1.6zM300.7 262.7h1.6v1.6h-1.6zM300.7 274.7h1.6v1.6h-1.6zM300.7 286.7h1.6v1.6h-1.6zM300.7 298.7h1.6v1.6h-1.6zM300.7 310.7h1.6v1.6h-1.6zM300.7 322.7h1.6v1.6h-1.6zM300.7 334.7h1.6v1.6h-1.6zM300.7 346.7h1.6v1.6h-1.6zM300.7 358.7h1.6v1.6h-1.6zM300.7 370.7h1.6v1.6h-1.6zM300.7 382.7h1.6v1.6h-1.6zM300.7 394.7h1.6v1.6h-1.6zM300.7 406.7h1.6v1.6h-1.6zM300.7 418.7h1.6v1.6h-1.6zM300.7 430.7h1.6v1.6h-1.6zM300.7 442.7h1.6v1.6h-1.6zM300.7 454.7h1.6v1.6h-1.6zM300.7 466.7h1.6v1.6h-1.6zM300.7 478.7h1.6v1.6h-1.6zM300.7 490.7h1.6v1.6h-1.6zM300.7 502.7h1.6v1.6h-1.6zM300.7 514.7h1.6v1.6h-1.6zM300.7 526.7h1.6v1.6h-1.6zM300.7 538.7h1.6v1.6h-1.6zM300.7 550.7h1.6v1.6h-1.6zM300.7 562.7h1.6v1.6h-1.6zM300.7 574.7h1.6v1.6h-1.6zM300.7 586.7h1.6v1.6h-1.6zM300.7 598.7h1.6v1.6h-1.6zM300.7 610.7h1.6v1.6h-1.6zM360.7 34.7h1.6v1.6h-1.6zM360.7 46.7h1.6v1.6h-1.6zM360.7 58.7h1.6v1.6h-1.6zM360.7 70.7h1.6v1.6h-1.6zM360.7 82.7h1.6v1.6h-1.6zM360.7 94.7h1.6v1.6h-1.6zM360.7 106.7h1.6v1.6h-1.6zM360.7 118.7h1.6v1.6h-1.6zM360.7 130.7h1.6v1.6h-1.6zM360.7 142.7h1.6v1.6h-1.6zM360.7 154.7h1.6v1.6h-1.6zM360.7 166.7h1.6v1.6h-1.6zM360.7 178.7h1.6v1.6h-1.6zM360.7 190.7h1.6v1.6h-1.6zM360.7 202.7h1.6v1.6h-1.6zM360.7 214.7h1.6v1.6h-1.6zM360.7 226.7h1.6v1.6h-1.6zM360.7 238.7h1.6v1.6h-1.6zM360.7 250.7h1.6v1.6h-1.6zM360.7 262.7h1.6v1.6h-1.6zM360.7 274.7h1.6v1.6h-1.6zM360.7 286.7h1.6v1.6h-1.6zM360.7 298.7h1.6v1.6h-1.6zM360.7 310.7h1.6v1.6h-1.6zM360.7 322.7h1.6v1.6h-1.6zM360.7 334.7h1.6v1.6h-1.6zM360.7 346.7h1.6v1.6h-1.6zM360.7 358.7h1.6v1.6h-1.6zM360.7 370.7h1.6v1.6h-1.6zM360.7 382.7h1.6v1.6h-1.6zM360.7 394.7h1.6v1.6h-1.6zM360.7 406.7h1.6v1.6h-1.6zM360.7 418.7h1.6v1.6h-1.6zM360.7 430.7h1.6v1.6h-1.6zM360.7 442.7h1.6v1.6h-1.6zM360.7 454.7h1.6v1.6h-1.6zM360.7 466.7h1.6v1.6h-1.6zM360.7 478.7h1.6v1.6h-1.6zM360.7 490.7h1.6v1.6h-1.6zM360.7 502.7h1.6v1.6h-1.6zM360.7 514.7h1.6v1.6h-1.6zM360.7 526.7h1.6v1.6h-1.6zM360.7 538.7h1.6v1.6h-1.6zM360.7 550.7h1.6v1.6h-1.6zM360.7 562.7h1.6v1.6h-1.6zM360.7 574.7h1.6v1.6h-1.6zM360.7 586.7h1.6v1.6h-1.6zM360.7 598.7h1.6v1.6h-1.6zM360.7 610.7h1.6v1.6h-1.6zM420.7 34.7h1.6v1.6h-1.6zM420.7 46.7h1.6v1.6h-1.6zM420.7 58.7h1.6v1.6h-1.6zM420.7 70.7h1.6v1.6h-1.6zM420.7 82.7h1.6v1.6h-1.6zM420.7 94.7h1.6v1.6h-1.6zM420.7 106.7h1.6v1.6h-1.6zM420.7 118.7h1.6v1.6h-1.6zM420.7 130.7h1.6v1.6h-1.6zM420.7 142.7h1.6v1.6h-1.6zM420.7 154.7h1.6v1.6h-1.6zM420.7 166.7h1.6v1.6h-1.6zM420.7 178.7h1.6v1.6h-1.6zM420.7 190.7h1.6v1.6h-1.6zM420.7 202.7h1.6v1.6h-1.6zM420.7 214.7h1.6v1.6h-1.6zM420.7 226.7h1.6v1.6h-1.6zM420.7 238.7h1.6v1.6h-1.6zM420.7 250.7h1.6v1.6h-1.6zM420.7 262.7h1.6v1.6h-1.6zM420.7 274.7h1.6v1.6h-1.6zM420.7 286.7h1.6v1.6h-1.6zM420.7 298.7h1.6v1.6h-1.6zM420.7 310.7h1.6v1.6h-1.6zM420.7 322.7h1.6v1.6h-1.6zM420.7 334.7h1.6v1.6h-1.6zM420.7 346.7h1.6v1.6h-1.6zM420.7 358.7h1.6v1.6h-1.6zM420.7 370.7h1.6v1.6h-1.6zM420.7 382.7h1.6v1.6h-1.6zM420.7 394.7h1.6v1.6h-1.6zM420.7 406.7h1.6v1.6h-1.6zM420.7 418.7h1.6v1.6h-1.6zM420.7 430.7h1.6v1.6h-1.6zM420.7 442.7h1.6v1.6h-1.6zM420.7 454.7h1.6v1.6h-1.6zM420.7 466.7h1.6v1.6h-1.6zM420.7 478.7h1.6v1.6h-1.6zM420.7 490.7h1.6v1.6h-1.6zM420.7 502.7h1.6v1.6h-1.6zM420.7 514.7h1.6v1.6h-1.6zM420.7 526.7h1.6v1.6h-1.6zM420.7 538.7h1.6v1.6h-1.6zM420.7 550.7h1.6v1.6h-1.6zM420.7 562.7h1.6v1.6h-1.6zM420.7 574.7h1.6v1.6h-1.6zM420.7 586.7h1.6v1.6h-1.6zM420.7 598.7h1.6v1.6h-1.6zM420.7 610.7h1.6v1.6h-1.6zM540.7 34.7h1.6v1.6h-1.6zM540.7 46.7h1.6v1.6h-1.6zM540.7 58.7h1.6v1.6h-1.6zM540.7 70.7h1.6v1.6h-1.6zM540.7 82.7h1.6v1.6h-1.6zM540.7 94.7h1.6v1.6h-1.6zM540.7 106.7h1.6v1.6h-1.6zM540.7 118.7h1.6v1.6h-1.6zM540.7 130.7h1.6v1.6h-1.6zM540.7 142.7h1.6v1.6h-1.6zM540.7 154.7h1.6v1.6h-1.6zM540.7 166.7h1.6v1.6h-1.6zM540.7 178.7h1.6v1.6h-1.6zM540.7 190.7h1.6v1.6h-1.6zM540.7 202.7h1.6v1.6h-1.6zM540.7 214.7h1.6v1.6h-1.6zM540.7 226.7h1.6v1.6h-1.6zM540.7 238.7h1.6v1.6h-1.6zM540.7 250.7h1.6v1.6h-1.6zM540.7 262.7h1.6v1.6h-1.6zM540.7 274.7h1.6v1.6h-1.6zM540.7 286.7h1.6v1.6h-1.6zM540.7 298.7h1.6v1.6h-1.6zM540.7 310.7h1.6v1.6h-1.6zM540.7 322.7h1.6v1.6h-1.6zM540.7 334.7h1.6v1.6h-1.6zM540.7 346.7h1.6v1.6h-1.6zM540.7 358.7h1.6v1.6h-1.6zM540.7 370.7h1.6v1.6h-1.6zM540.7 382.7h1.6v1.6h-1.6zM540.7 394.7h1.6v1.6h-1.6zM540.7 406.7h1.6v1.6h-1.6zM540.7 418.7h1.6v1.6h-1.6zM540.7 430.7h1.6v1.6h-1.6zM540.7 442.7h1.6v1.6h-1.6zM540.7 454.7h1.6v1.6h-1.6zM540.7 466.7h1.6v1.6h-1.6zM540.7 478.7h1.6v1.6h-1.6zM540.7 490.7h1.6v1.6h-1.6zM540.7 502.7h1.6v1.6h-1.6zM540.7 514.7h1.6v1.6h-1.6zM540.7 526.7h1.6v1.6h-1.6zM540.7 538.7h1.6v1.6h-1.6zM540.7 550.7h1.6v1.6h-1.6zM540.7 562.7h1.6v1.6h-1.6zM540.7 574.7h1.6v1.6h-1.6zM540.7 586.7h1.6v1.6h-1.6zM540.7 598.7h1.6v1.6h-1.6zM540.7 610.7h1.6v1.6h-1.6zM600.7 34.7h1.6v1.6h-1.6zM600.7 46.7h1.6v1.6h-1.6zM600.7 58.7h1.6v1.6h-1.6zM600.7 70.7h1.6v1.6h-1.6zM600.7 82.7h1.6v1.6h-1.6zM600.7 94.7h1.6v1.6h-1.6zM600.7 106.7h1.6v1.6h-1.6zM600.7 118.7h1.6v1.6h-1.6zM600.7 130.7h1.6v1.6h-1.6zM600.7 142.7h1.6v1.6h-1.6zM600.7 154.7h1.6v1.6h-1.6zM600.7 166.7h1.6v1.6h-1.6zM600.7 178.7h1.6v1.6h-1.6zM600.7 190.7h1.6v1.6h-1.6zM600.7 202.7h1.6v1.6h-1.6zM600.7 214.7h1.6v1.6h-1.6zM600.7 226.7h1.6v1.6h-1.6zM600.7 238.7h1.6v1.6h-1.6zM600.7 250.7h1.6v1.6h-1.6zM600.7 262.7h1.6v1.6h-1.6zM600.7 274.7h1.6v1.6h-1.6zM600.7 286.7h1.6v1.6h-1.6zM600.7 298.7h1.6v1.6h-1.6zM600.7 310.7h1.6v1.6h-1.6zM600.7 322.7h1.6v1.6h-1.6zM600.7 334.7h1.6v1.6h-1.6zM600.7 346.7h1.6v1.6h-1.6zM600.7 358.7h1.6v1.6h-1.6zM600.7 370.7h1.6v1.6h-1.6zM600.7 382.7h1.6v1.6h-1.6zM600.7 394.7h1.6v1.6h-1.6zM600.7 406.7h1.6v1.6h-1.6zM600.7 418.7h1.6v1.6h-1.6zM600.7 430.7h1.6v1.6h-1.6zM600.7 442.7h1.6v1.6h-1.6zM600.7 454.7h1.6v1.6h-1.6zM600.7 466.7h1.6v1.6h-1.6zM600.7 478.7h1.6v1.6h-1.6zM600.7 490.7h1.6v1.6h-1.6zM600.7 502.7h1.6v1.6h-1.6zM600.7 514.7h1.6v1.6h-1.6zM600.7 526.7h1.6v1.6h-1.6zM600.7 538.7h1.6v1.6h-1.6zM600.7 550.7h1.6v1.6h-1.6zM600.7 562.7h1.6v1.6h-1.6zM600.7 574.7h1.6v1.6h-1.6zM600.7 586.7h1.6v1.6h-1.6zM600.7 598.7h1.6v1.6h-1.6zM600.7 610.7h1.6v1.6h-1.6zM660.7 34.7h1.6v1.6h-1.6zM660.7 46.7h1.6v1.6h-1.6zM660.7 58.7h1.6v1.6h-1.6zM660.7 70.7h1.6v1.6h-1.6zM660.7 82.7h1.6v1.6h-1.6zM660.7 94.7h1.6v1.6h-1.6zM660.7 106.7h1.6v1.6h-1.6zM660.7 118.7h1.6v1.6h-1.6zM660.7 130.7h1.6v1.6h-1.6zM660.7 142.7h1.6v1.6h-1.6zM660.7 154.7h1.6v1.6h-1.6zM660.7 166.7h1.6v1.6h-1.6zM660.7 178.7h1.6v1.6h-1.6zM660.7 190.7h1.6v1.6h-1.6zM660.7 202.7h1.6v1.6h-1.6zM660.7 214.7h1.6v1.6h-1.6zM660.7 226.7h1.6v1.6h-1.6zM660.7 238.7h1.6v1.6h-1.6zM660.7 250.7h1.6v1.6h-1.6zM660.7 262.7h1.6v1.6h-1.6zM660.7 274.7h1.6v1.6h-1.6zM660.7 286.7h1.6v1.6h-1.6zM660.7 298.7h1.6v1.6h-1.6zM660.7 310.7h1.6v1.6h-1.6zM660.7 322.7h1.6v1.6h-1.6zM660.7 334.7h1.6v1.6h-1.6zM660.7 346.7h1.6v1.6h-1.6zM660.7 358.7h1.6v1.6h-1.6zM660.7 370.7h1.6v1.6h-1.6zM660.7 382.7h1.6v1.6h-1.6zM660.7 394.7h1.6v1.6h-1.6zM660.7 406.7h1.6v1.6h-1.6zM660.7 418.7h1.6v1.6h-1.6zM660.7 430.7h1.6v1.6h-1.6zM660.7 442.7h1.6v1.6h-1.6zM660.7 454.7h1.6v1.6h-1.6zM660.7 466.7h1.6v1.6h-1.6zM660.7 478.7h1.6v1.6h-1.6zM660.7 490.7h1.6v1.6h-1.6zM660.7 502.7h1.6v1.6h-1.6zM660.7 514.7h1.6v1.6h-1.6zM660.7 526.7h1.6v1.6h-1.6zM660.7 538.7h1.6v1.6h-1.6zM660.7 550.7h1.6v1.6h-1.6zM660.7 562.7h1.6v1.6h-1.6zM660.7 574.7h1.6v1.6h-1.6zM660.7 586.7h1.6v1.6h-1.6zM660.7 598.7h1.6v1.6h-1.6zM660.7 610.7h1.6v1.6h-1.6zM720.7 34.7h1.6v1.6h-1.6zM720.7 46.7h1.6v1.6h-1.6zM720.7 58.7h1.6v1.6h-1.6zM720.7 70.7h1.6v1.6h-1.6zM720.7 82.7h1.6v1.6h-1.6zM720.7 94.7h1.6v1.6h-1.6zM720.7 106.7h1.6v1.6h-1.6zM720.7 118.7h1.6v1.6h-1.6zM720.7 130.7h1.6v1.6h-1.6zM720.7 142.7h1.6v1.6h-1.6zM720.7 154.7h1.6v1.6h-1.6zM720.7 166.7h1.6v1.6h-1.6zM720.7 178.7h1.6v1.6h-1.6zM720.7 190.7h1.6v1.6h-1.6zM720.7 202.7h1.6v1.6h-1.6zM720.7 214.7h1.6v1.6h-1.6zM720.7 226.7h1.6v1.6h-1.6zM720.7 238.7h1.6v1.6h-1.6zM720.7 250.7h1.6v1.6h-1.6zM720.7 262.7h1.6v1.6h-1.6zM720.7 274.7h1.6v1.6h-1.6zM720.7 286.7h1.6v1.6h-1.6zM720.7 298.7h1.6v1.6h-1.6zM720.7 310.7h1.6v1.6h-1.6zM720.7 322.7h1.6v1.6h-1.6zM720.7 334.7h1.6v1.6h-1.6zM720.7 346.7h1.6v1.6h-1.6zM720.7 358.7h1.6v1.6h-1.6zM720.7 370.7h1.6v1.6h-1.6zM720.7 382.7h1.6v1.6h-1.6zM720.7 394.7h1.6v1.6h-1.6zM720.7 406.7h1.6v1.6h-1.6zM720.7 418.7h1.6v1.6h-1.6zM720.7 430.7h1.6v1.6h-1.6zM720.7 442.7h1.6v1.6h-1.6zM720.7 454.7h1.6v1.6h-1.6zM720.7 466.7h1.6v1.6h-1.6zM720.7 478.7h1.6v1.6h-1.6zM720.7 490.7h1.6v1.6h-1.6zM720.7 502.7h1.6v1.6h-1.6zM720.7 514.7h1.6v1.6h-1.6zM720.7 526.7h1.6v1.6h-1.6zM720.7 538.7h1.6v1.6h-1.6zM720.7 550.7h1.6v1.6h-1.6zM720.7 562.7h1.6v1.6h-1.6zM720.7 574.7h1.6v1.6h-1.6zM720.7 586.7h1.6v1.6h-1.6zM720.7 598.7h1.6v1.6h-1.6zM720.7 610.7h1.6v1.6h-1.6zM780.7 34.7h1.6v1.6h-1.6zM780.7 46.7h1.6v1.6h-1.6zM780.7 58.7h1.6v1.6h-1.6zM780.7 70.7h1.6v1.6h-1.6zM780.7 82.7h1.6v1.6h-1.6zM780.7 94.7h1.6v1.6h-1.6zM780.7 106.7h1.6v1.6h-1.6zM780.7 118.7h1.6v1.6h-1.6zM780.7 130.7h1.6v1.6h-1.6zM780.7 142.7h1.6v1.6h-1.6zM780.7 154.7h1.6v1.6h-1.6zM780.7 166.7h1.6v1.6h-1.6zM780.7 178.7h1.6v1.6h-1.6zM780.7 190.7h1.6v1.6h-1.6zM780.7 202.7h1.6v1.6h-1.6zM780.7 214.7h1.6v1.6h-1.6zM780.7 226.7h1.6v1.6h-1.6zM780.7 238.7h1.6v1.6h-1.6zM780.7 250.7h1.6v1.6h-1.6zM780.7 262.7h1.6v1.6h-1.6zM780.7 274.7h1.6v1.6h-1.6zM780.7 286.7h1.6v1.6h-1.6zM780.7 298.7h1.6v1.6h-1.6zM780.7 310.7h1.6v1.6h-1.6zM780.7 322.7h1.6v1.6h-1.6zM780.7 334.7h1.6v1.6h-1.6zM780.7 346.7h1.6v1.6h-1.6zM780.7 358.7h1.6v1.6h-1.6zM780.7 370.7h1.6v1.6h-1.6zM780.7 382.7h1.6v1.6h-1.6zM780.7 394.7h1.6v1.6h-1.6zM780.7 406.7h1.6v1.6h-1.6zM780.7 418.7h1.6v1.6h-1.6zM780.7 430.7h1.6v1.6h-1.6zM780.7 442.7h1.6v1.6h-1.6zM780.7 454.7h1.6v1.6h-1.6zM780.7 466.7h1.6v1.6h-1.6zM780.7 478.7h1.6v1.6h-1.6zM780.7 490.7h1.6v1.6h-1.6zM780.7 502.7h1.6v1.6h-1.6zM780.7 514.7h1.6v1.6h-1.6zM780.7 526.7h1.6v1.6h-1.6zM780.7 538.7h1.6v1.6h-1.6zM780.7 550.7h1.6v1.6h-1.6zM780.7 562.7h1.6v1.6h-1.6zM780.7 574.7h1.6v1.6h-1.6zM780.7 586.7h1.6v1.6h-1.6zM780.7 598.7h1.6v1.6h-1.6zM780.7 610.7h1.6v1.6h-1.6zM840.7 34.7h1.6v1.6h-1.6zM840.7 46.7h1.6v1.6h-1.6zM840.7 58.7h1.6v1.6h-1.6zM840.7 70.7h1.6v1.6h-1.6zM840.7 82.7h1.6v1.6h-1.6zM840.7 94.7h1.6v1.6h-1.6zM840.7 106.7h1.6v1.6h-1.6zM840.7 118.7h1.6v1.6h-1.6zM840.7 130.7h1.6v1.6h-1.6zM840.7 142.7h1.6v1.6h-1.6zM840.7 154.7h1.6v1.6h-1.6zM840.7 166.7h1.6v1.6h-1.6zM840.7 178.7h1.6v1.6h-1.6zM840.7 190.7h1.6v1.6h-1.6zM840.7 202.7h1.6v1.6h-1.6zM840.7 214.7h1.6v1.6h-1.6zM840.7 226.7h1.6v1.6h-1.6zM840.7 238.7h1.6v1.6h-1.6zM840.7 250.7h1.6v1.6h-1.6zM840.7 262.7h1.6v1.6h-1.6zM840.7 274.7h1.6v1.6h-1.6zM840.7 286.7h1.6v1.6h-1.6zM840.7 298.7h1.6v1.6h-1.6zM840.7 310.7h1.6v1.6h-1.6zM840.7 322.7h1.6v1.6h-1.6zM840.7 334.7h1.6v1.6h-1.6zM840.7 346.7h1.6v1.6h-1.6zM840.7 358.7h1.6v1.6h-1.6zM840.7 370.7h1.6v1.6h-1.6zM840.7 382.7h1.6v1.6h-1.6zM840.7 394.7h1.6v1.6h-1.6zM840.7 406.7h1.6v1.6h-1.6zM840.7 418.7h1.6v1.6h-1.6zM840.7 430.7h1.6v1.6h-1.6zM840.7 442.7h1.6v1.6h-1.6zM840.7 454.7h1.6v1.6h-1.6zM840.7 466.7h1.6v1.6h-1.6zM840.7 478.7h1.6v1.6h-1.6zM840.7 490.7h1.6v1.6h-1.6zM840.7 502.7h1.6v1.6h-1.6zM840.7 514.7h1.6v1.6h-1.6zM840.7 526.7h1.6v1.6h-1.6zM840.7 538.7h1.6v1.6h-1.6zM840.7 550.7h1.6v1.6h-1.6zM840.7 562.7h1.6v1.6h-1.6zM840.7 574.7h1.6v1.6h-1.6zM840.7 586.7h1.6v1.6h-1.6zM840.7 598.7h1.6v1.6h-1.6zM840.7 610.7h1.6v1.6h-1.6zM900.7 34.7h1.6v1.6h-1.6zM900.7 46.7h1.6v1.6h-1.6zM900.7 58.7h1.6v1.6h-1.6zM900.7 70.7h1.6v1.6h-1.6zM900.7 82.7h1.6v1.6h-1.6zM900.7 94.7h1.6v1.6h-1.6zM900.7 106.7h1.6v1.6h-1.6zM900.7 118.7h1.6v1.6h-1.6zM900.7 130.7h1.6v1.6h-1.6zM900.7 142.7h1.6v1.6h-1.6zM900.7 154.7h1.6v1.6h-1.6zM900.7 166.7h1.6v1.6h-1.6zM900.7 178.7h1.6v1.6h-1.6zM900.7 190.7h1.6v1.6h-1.6zM900.7 202.7h1.6v1.6h-1.6zM900.7 214.7h1.6v1.6h-1.6zM900.7 226.7h1.6v1.6h-1.6zM900.7 238.7h1.6v1.6h-1.6zM900.7 250.7h1.6v1.6h-1.6zM900.7 262.7h1.6v1.6h-1.6zM900.7 274.7h1.6v1.6h-1.6zM900.7 286.7h1.6v1.6h-1.6zM900.7 298.7h1.6v1.6h-1.6zM900.7 310.7h1.6v1.6h-1.6zM900.7 322.7h1.6v1.6h-1.6zM900.7 334.7h1.6v1.6h-1.6zM900.7 346.7h1.6v1.6h-1.6zM900.7 358.7h1.6v1.6h-1.6zM900.7 370.7h1.6v1.6h-1.6zM900.7 382.7h1.6v1.6h-1.6zM900.7 394.7h1.6v1.6h-1.6zM900.7 406.7h1.6v1.6h-1.6zM900.7 418.7h1.6v1.6h-1.6zM900.7 430.7h1.6v1.6h-1.6zM900.7 442.7h1.6v1.6h-1.6zM900.7 454.7h1.6v1.6h-1.6zM900.7 466.7h1.6v1.6h-1.6zM900.7 478.7h1.6v1.6h-1.6zM900.7 490.7h1.6v1.6h-1.6zM900.7 502.7h1.6v1.6h-1.6zM900.7 514.7h1.6v1.6h-1.6zM900.7 526.7h1.6v1.6h-1.6zM900.7 538.7h1.6v1.6h-1.6zM900.7 550.7h1.6v1.6h-1.6zM900.7 562.7h1.6v1.6h-1.6zM900.7 574.7h1.6v1.6h-1.6zM900.7 586.7h1.6v1.6h-1.6zM900.7 598.7h1.6v1.6h-1.6zM900.7 610.7h1.6v1.6h-1.6z"/>
<path fill="#e0e0e0" d="M37 321.5h1v4h-1zM49 321.5h1v4h-1zM61 321.5h1v4h-1zM73 321.5h1v4h-1zM85 321.5h1v4h-1zM97 321.5h1v4h-1zM109 321.5h1v4h-1zM121 321.5h1v4h-1zM133 321.5h1v4h-1zM145 321.5h1v4h-1zM157 321.5h1v4h-1zM169 321.5h1v4h-1zM181 321.5h1v4h-1zM193 321.5h1v4h-1zM205 321.5h1v4h-1zM217 321.5h1v4h-1zM229 321.5h1v4h-1zM241 321.5h1v4h-1zM253 321.5h1v4h-1zM265 321.5h1v4h-1zM277 321.5h1v4h-1zM289 321.5h1v4h-1zM301 321.5h1v4h-1zM313 321.5h1v4h-1zM325 321.5h1v4h-1zM337 321.5h1v4h-1zM349 321.5h1v4h-1zM361 321.5h1v4h-1zM373 321.5h1v4h-1zM385 321.5h1v4h-1zM397 321.5h1v4h-1zM409 321.5h1v4h-1zM421 321.5h1v4h-1zM433 321.5h1v4h-1zM445 321.5h1v4h-1zM457 321.5h1v4h-1zM469 321.5h1v4h-1zM481 321.5h1v4h-1zM493 321.5h1v4h-1zM505 321.5h1v4h-1zM517 321.5h1v4h-1zM529 321.5h1v4h-1zM541 321.5h1v4h-1zM553 321.5h1v4h-1zM565 321.5h1v4h-1zM577 321.5h1v4h-1zM589 321.5h1v4h-1zM601 321.5h1v4h-1zM613 321.5h1v4h-1zM625 321.5h1v4h-1zM637 321.5h1v4h-1zM649 321.5h1v4h-1zM661 321.5h1v4h-1zM673 321.5h1v4h-1zM685 321.5h1v4h-1zM697 321.5h1v4h-1zM709 321.5h1v4h-1zM721 321.5h1v4h-1zM733 321.5h1v4h-1zM745 321.5h1v4h-1zM757 321.5h1v4h-1zM769 321.5h1v4h-1zM781 321.5h1v4h-1zM793 321.5h1v4h-1zM805 321.5h1v4h-1zM817 321.5h1v4h-1zM829 321.5h1v4h-1zM841 321.5h1v4h-1zM853 321.5h1v4h-1zM865 321.5h1v4h-1zM877 321.5h1v4h-1zM889 321.5h1v4h-1zM901 321.5h1v4h-1zM913 321.5h1v4h-1zM925 321.5h1v4h-1zM480 35h3v1h-3zM480 47h3v1h-3zM480 59h3v1h-3zM480 71h3v1h-3zM480 83h3v1h-3zM480 95h3v1h-3zM480 107h3v1h-3zM480 119h3v1h-3zM480 131h3v1h-3zM480 143h3v1h-3zM480 155h3v1h-3zM480 167h3v1h-3zM480 179h3v1h-3zM480 191h3v1h-3zM480 203h3v1h-3zM480 215h3v1h-3zM480 227h3v1h-3zM480 239h3v1h-3zM480 251h3v1h-3zM480 263h3v1h-3zM480 275h3v1h-3zM480 287h3v1h-3zM480 299h3v1h-3zM480 311h3v1h-3zM480 323h3v1h-3zM480 335h3v1h-3zM480 347h3v1h-3zM480 359h3v1h-3zM480 371h3v1h-3zM480 383h3v1h-3zM480 395h3v1h-3zM480 407h3v1h-3zM480 419h3v1h-3zM480 431h3v1h-3zM480 443h3v1h-3zM480 455h3v1h-3zM480 467h3v1h-3zM480 479h3v1h-3zM480 491h3v1h-3zM480 503h3v1h-3zM480 515h3v1h-3zM480 527h3v1h-3zM480 539h3v1h-3zM480 551h3v1h-3zM480 563h3v1h-3zM480 575h3v1h-3zM480 587h3v1h-3zM480 599h3v1h-3zM480 611h3v1h-3z"/>
<path fill="#f0f0f0" d="M37 25h1v3h-1zM37 617h1v3h-1zM49 25h1v3h-1zM49 617h1v3h-1zM61 25h1v6h-1zM61 614h1v6h-1zM73 25h1v3h-1zM73 617h1v3h-1zM85 25h1v3h-1zM85 617h1v3h-1zM97 25h1v3h-1zM97 617h1v3h-1zM109 25h1v3h-1zM109 617h1v3h-1zM121 25h1v6h-1zM121 614h1v6h-1zM133 25h1v3h-1zM133 617h1v3h-1zM145 25h1v3h-1zM145 617h1v3h-1zM157 25h1v3h-1zM157 617h1v3h-1zM169 25h1v3h-1zM169 617h1v3h-1zM181 25h1v6h-1zM181 614h1v6h-1zM193 25h1v3h-1zM193 617h1v3h-1zM205 25h1v3h-1zM205 617h1v3h-1zM217 25h1v3h-1zM217 617h1v3h-1zM229 25h1v3h-1zM229 617h1v3h-1zM241 25h1v6h-1zM241 614h1v6h-1zM253 25h1v3h-1zM253 617h1v3h-1zM265 25h1v3h-1zM265 617h1v3h-1zM277 25h1v3h-1zM277 617h1v3h-1zM289 25h1v3h-1zM289 617h1v3h-1zM301 25h1v6h-1zM301 614h1v6h-1zM313 25h1v3h-1zM313 617h1v3h-1zM325 25h1v3h-1zM325 617h1v3h-1zM337 25h1v3h-1zM337 617h1v3h-1zM349 25h1v3h-1zM349 617h1v3h-1zM361 25h1v6h-1zM361 614h1v6h-1zM373 25h1v3h-1zM373 617h1v3h-1zM385 25h1v3h-1zM385 617h1v3h-1zM397 25h1v3h-1zM397 617h1v3h-1zM409 25h1v3h-1zM409 617h1v3h-1zM421 25h1v6h-1zM421 614h1v6h-1zM433 25h1v3h-1zM433 617h1v3h-1zM445 25h1v3h-1zM445 617h1v3h-1zM457 25h1v3h-1zM457 617h1v3h-1zM469 25h1v3h-1zM469 617h1v3h-1zM481 25h1v6h-1zM481 614h1v6h-1zM493 25h1v3h-1zM493 617h1v3h-1zM505 25h1v3h-1zM505 617h1v3h-1zM517 25h1v3h-1zM517 617h1v3h-1zM529 25h1v3h-1zM529 617h1v3h-1zM541 25h1v6h-1zM541 614h1v6h-1zM553 25h1v3h-1zM553 617h1v3h-1zM565 25h1v3h-1zM565 617h1v3h-1zM577 25h1v3h-1zM577 617h1v3h-1zM589 25h1v3h-1zM589 617h1v3h-1zM601 25h1v6h-1zM601 614h1v6h-1zM613 25h1v3h-1zM613 617h1v3h-1zM625 25h1v3h-1zM625 617h1v3h-1zM637 25h1v3h-1zM637 617h1v3h-1zM649 25h1v3h-1zM649 617h1v3h-1zM661 25h1v6h-1zM661 614h1v6h-1zM673 25h1v3h-1zM673 617h1v3h-1zM685 25h1v3h-1zM685 617h1v3h-1zM697 25h1v3h-1zM697 617h1v3h-1zM709 25h1v3h-1zM709 617h1v3h-1zM721 25h1v6h-1zM721 614h1v6h-1zM733 25h1v3h-1zM733 617h1v3h-1zM745 25h1v3h-1zM745 617h1v3h-1zM757 25h1v3h-1zM757 617h1v3h-1zM769 25h1v3h-1zM769 617h1v3h-1zM781 25h1v6h-1zM781 614h1v6h-1zM793 25h1v3h-1zM793 617h1v3h-1zM805 25h1v3h-1zM805 617h1v3h-1zM817 25h1v3h-1zM817 617h1v3h-1zM829 25h1v3h-1zM829 617h1v3h-1zM841 25h1v6h-1zM841 614h1v6h-1zM853 25h1v3h-1zM853 617h1v3h-1zM865 25h1v3h-1zM865 617h1v3h-1zM877 25h1v3h-1zM877 617h1v3h-1zM889 25h1v3h-1zM889 617h1v3h-1zM901 25h1v6h-1zM901 614h1v6h-1zM913 25h1v3h-1zM913 617h1v3h-1zM925 25h1v3h-1zM925 617h1v3h-1zM26 35h4v1h-4zM929 35h4v1h-4zM26 47h4v1h-4zM929 47h4v1h-4zM26 59h4v1h-4zM929 59h4v1h-4zM26 71h4v1h-4zM929 71h4v1h-4zM26 83h7v1h-7zM926 83h7v1h-7zM26 95h4v1h-4zM929 95h4v1h-4zM26 107h4v1h-4zM929 107h4v1h-4zM26 119h4v1h-4zM929 119h4v1h-4zM26 131h4v1h-4zM929 131h4v1h-4zM26 143h7v1h-7zM926 143h7v1h-7zM26 155h4v1h-4zM929 155h4v1h-4zM26 167h4v1h-4zM929 167h4v1h-4zM26 179h4v1h-4zM929 179h4v1h-4zM26 191h4v1h-4zM929 191h4v1h-4zM26 203h7v1h-7zM926 203h7v1h-7zM26 215h4v1h-4zM929 215h4v1h-4zM26 227h4v1h-4zM929 227h4v1h-4zM26 239h4v1h-4zM929 239h4v1h-4zM26 251h4v1h-4zM929 251h4v1h-4zM26 263h7v1h-7zM926 263h7v1h-7zM26 275h4v1h-4zM929 275h4v1h-4zM26 287h4v1h-4zM929 287h4v1h-4zM26 299h4v1h-4zM929 299h4v1h-4zM26 311h4v1h-4zM929 311h4v1h-4zM26 323h7v1h-7zM926 323h7v1h-7zM26 335h4v1h-4zM929 335h4v1h-4zM26 347h4v1h-4zM929 347h4v1h-4zM26 359h4v1h-4zM929 359h4v1h-4zM26 371h4v1h-4zM929 371h4v1h-4zM26 383h7v1h-7zM926 383h7v1h-7zM26 395h4v1h-4zM929 395h4v1h-4zM26 407h4v1h-4zM929 407h4v1h-4zM26 419h4v1h-4zM929 419h4v1h-4zM26 431h4v1h-4zM929 431h4v1h-4zM26 443h7v1h-7zM926 443h7v1h-7zM26 455h4v1h-4zM929 455h4v1h-4zM26 467h4v1h-4zM929 467h4v1h-4zM26 479h4v1h-4zM929 479h4v1h-4zM26 491h4v1h-4zM929 491h4v1h-4zM26 503h7v1h-7zM926 503h7v1h-7zM26 515h4v1h-4zM929 515h4v1h-4zM26 527h4v1h-4zM929 527h4v1h-4zM26 539h4v1h-4zM929 539h4v1h-4zM26 551h4v1h-4zM929 551h4v1h-4zM26 563h7v1h-7zM926 563h7v1h-7zM26 575h4v1h-4zM929 575h4v1h-4zM26 587h4v1h-4zM929 587h4v1h-4zM26 599h4v1h-4zM929 599h4v1h-4zM26 611h4v1h-4zM929 611h4v1h-4z"/>
<path fill="#e8e8e8" d="M175 323h13v1h-13zM181 317h1v13h-1z"/>
<path fill="#e8e8e8" d="M775 323h13v1h-13zM781 317h1v13h-1z"/>
<path fill="#e8e8e8" d="M478 323h7v1h-7zM481 320h1v7h-1z"/>
<polyline points="26,323.9 76,323.9 76,323.9 76,271.7 77.5,265.8 90,236.7 91,235.3 106,235.3 110.6,245.9 121,245.9 126,259.0 136.5,259.0 139.8,269.75 151,269.75 152.5,276.85 166,276.85 166,273.5 179.8,273.5 184.8,260.5 196,260.5 200.6,249.0 212,249.0 215,240.5 226,240.5 229,238.0 241,238.0 243,240.5 256,240.5 260,250.5 272,250.5 276,264.0 287.5,264.0 291,275.0 315,275.0 320,267.0 332,267.0 336,252.5 346,252.5 351,239.0 362,239.0 365.6,230.0 377.5,230.0 379,226.5 391,226.5 393,232.0 407,232.0 411,243.25 422,243.25 428,258.0 436,258.0 442.5,273.75 451,273.75 454,277.25 465.6,277.25 470,266.5 482.5,266.5 487.5,249.0 497.5,249.0 503,234.0 511,234.0 515.6,222.0 540.6,222.0 542,224.5 557,224.5 562,235.5 572,235.5 577.5,254.0 585.6,254.0 592.5,269.25 601,269.25 604,276.75 616,276.75 620,267.5 631,267.5 638,250.0 646,250.0 654,233.0 662,233.0 667,223.0 706.4,223.0 710,235.0 721.7,235.0 727,249.5 736,249.5 742.5,266.75 751.5,266.75 756.4,279.25 766.8,279.25 769.6,287.0 794,287.0 795.5,282.75 812,282.75 813.4,277.25 901.7,277.25 901.7,323.75 933,323.75" fill="none" stroke="#f2ea00" stroke-width="1.5" stroke-linejoin="round"/>
<path fill="#f2ea00" d="M26.0 322.8H76.0V325.0H26.0zM91.0 234.0H106.0V236.6H91.0zM110.6 243.8H121.0V248.0H110.6zM126.0 257.5H136.5V260.5H126.0zM139.8 267.5H151.0V272.0H139.8zM152.5 274.7H166.0V279.0H152.5zM166.0 272.5H179.8V274.5H166.0zM184.8 258.0H196.0V263.0H184.8zM200.6 247.0H212.0V251.0H200.6zM215.0 238.5H226.0V242.5H215.0zM229.0 236.0H241.0V240.0H229.0zM243.0 238.5H256.0V242.5H243.0zM260.0 248.5H272.0V252.5H260.0zM276.0 262.0H287.5V266.0H276.0zM291.0 272.5H315.0V277.5H291.0zM320.0 265.0H332.0V269.0H320.0zM336.0 250.5H346.0V254.5H336.0zM351.0 236.5H362.0V241.5H351.0zM365.6 228.0H377.5V232.0H365.6zM379.0 224.5H391.0V228.5H379.0zM393.0 229.5H407.0V234.5H393.0zM411.0 241.0H422.0V245.5H411.0zM428.0 256.0H436.0V260.0H428.0zM442.5 272.0H451.0V275.5H442.5zM454.0 275.5H465.6V279.0H454.0zM470.0 264.5H482.5V268.5H470.0zM487.5 247.0H497.5V251.0H487.5zM503.0 232.0H511.0V236.0H503.0zM515.6 220.0H540.6V224.0H515.6zM542.0 222.5H557.0V226.5H542.0zM562.0 233.5H572.0V237.5H562.0zM577.5 252.0H585.6V256.0H577.5zM592.5 267.0H601.0V271.5H592.5zM604.0 274.5H616.0V279.0H604.0zM620.0 265.5H631.0V269.5H620.0zM638.0 248.0H646.0V252.0H638.0zM654.0 231.0H662.0V235.0H654.0zM667.0 220.5H706.4V225.5H667.0zM710.0 233.0H721.7V237.0H710.0zM727.0 247.5H736.0V251.5H727.0zM742.5 264.5H751.5V269.0H742.5zM756.4 277.0H766.8V281.5H756.4zM769.6 285.0H794.0V289.0H769.6zM795.5 281.5H812.0V284.0H795.5zM813.4 276.0H901.7V278.5H813.4zM901.7 322.5H933.0V325.0H901.7z"/>
<path fill="#f2ea00" d="M843 273h1v3h-1zM849 274h1v2h-1zM821 274h1v2h-1zM846 274h1v2h-1zM892 273h1v3h-1zM818 272h1v4h-1zM851 273h1v3h-1zM823 272h1v4h-1zM820 274h1v2h-1zM896 274h1v2h-1zM864 272h1v4h-1zM819 273h1v3h-1zM819 273h1v3h-1zM840 273h1v3h-1zM861 273h1v3h-1zM863 273h1v3h-1zM824 273h1v3h-1zM847 274h1v2h-1zM863 273h1v3h-1zM857 272h1v4h-1zM881 272h1v4h-1zM865 272h1v4h-1zM846 273h1v3h-1zM883 273h1v3h-1zM822 273h1v3h-1zM860 273h1v3h-1zM877 273h1v3h-1zM867 274h1v2h-1zM825 272h1v4h-1zM829 273h1v3h-1zM828 272h1v4h-1zM851 274h1v2h-1zM880 273h1v3h-1zM844 273h1v3h-1zM866 272h1v4h-1zM821 274h1v2h-1zM895 272h1v4h-1zM874 274h1v2h-1zM820 273h1v3h-1zM870 272h1v4h-1zM41 320.5h1v2.5h-1zM59 320.5h1v2.5h-1zM50 320.5h1v2.5h-1zM34 320.5h1v2.5h-1zM64 320.5h1v2.5h-1zM40 320.5h1v2.5h-1zM69 320.5h1v2.5h-1zM49 325h1v2.5h-1zM70 325h1v2.5h-1zM69 320.5h1v2.5h-1zM48 320.5h1v2.5h-1zM70 325h1v2.5h-1zM908 320.5h1v2.5h-1zM910 320.5h1v2.5h-1zM917 325h1v2.5h-1zM911 320.5h1v2.5h-1zM915 320.5h1v2.5h-1zM919 325h1v2.5h-1zM923 325h1v2.5h-1zM921 325h1v2.5h-1zM905 325h1v2.5h-1zM925 325h1v2.5h-1zM65 320.8h1v2h-1zM46 320.8h1v2h-1zM57 320.8h1v2h-1zM30 320.8h1v2h-1zM35 320.8h1v2h-1zM30 320.8h1v2h-1zM34 320.8h1v2h-1zM44 320.8h1v2h-1zM103 236.6h1v2h-1zM94 232.0h1v2h-1zM115 241.8h1v2h-1zM128 260.5h1v2h-1zM150 265.5h1v2h-1zM159 272.7h1v2h-1zM155 272.7h1v2h-1zM170 274.5h1v2h-1zM169 270.5h1v2h-1zM195 263.0h1v2h-1zM203 251.0h1v2h-1zM216 242.5h1v2h-1zM240 240.0h1v2h-1zM237 234.0h1v2h-1zM248 236.5h1v2h-1zM252 242.5h1v2h-1zM269 246.5h1v2h-1zM263 252.5h1v2h-1zM286 266.0h1v2h-1zM310 277.5h1v2h-1zM308 270.5h1v2h-1zM303 270.5h1v2h-1zM293 270.5h1v2h-1zM324 263.0h1v2h-1zM328 269.0h1v2h-1zM341 254.5h1v2h-1zM361 241.5h1v2h-1zM370 226.0h1v2h-1zM382 222.5h1v2h-1zM382 228.5h1v2h-1zM405 234.5h1v2h-1zM400 234.5h1v2h-1zM419 239.0h1v2h-1zM433 260.0h1v2h-1zM449 275.5h1v2h-1zM460 273.5h1v2h-1zM479 262.5h1v2h-1zM479 268.5h1v2h-1zM492 245.0h1v2h-1zM510 236.0h1v2h-1zM521 218.0h1v2h-1zM520 224.0h1v2h-1zM535 218.0h1v2h-1zM536 224.0h1v2h-1zM552 220.5h1v2h-1zM550 220.5h1v2h-1zM563 237.5h1v2h-1zM582 256.0h1v2h-1zM600 265.0h1v2h-1zM614 279.0h1v2h-1zM607 272.5h1v2h-1zM624 263.5h1v2h-1zM643 246.0h1v2h-1zM658 229.0h1v2h-1zM702 218.5h1v2h-1zM685 225.5h1v2h-1zM702 218.5h1v2h-1zM702 225.5h1v2h-1zM688 225.5h1v2h-1zM669 218.5h1v2h-1zM713 231.0h1v2h-1zM734 245.5h1v2h-1zM747 269.0h1v2h-1zM762 275.0h1v2h-1zM782 289.0h1v2h-1zM788 283.0h1v2h-1zM783 283.0h1v2h-1zM777 289.0h1v2h-1zM804 284.0h1v2h-1zM808 284.0h1v2h-1zM853 278.5h1v2h-1zM858 278.5h1v2h-1zM874 274.0h1v2h-1zM860 274.0h1v2h-1zM896 278.5h1v2h-1zM890 278.5h1v2h-1zM837 278.5h1v2h-1zM896 278.5h1v2h-1zM826 274.0h1v2h-1zM853 274.0h1v2h-1zM835 274.0h1v2h-1zM872 278.5h1v2h-1zM892 274.0h1v2h-1zM876 278.5h1v2h-1zM907 325.0h1v2h-1zM931 320.5h1v2h-1zM931 320.5h1v2h-1zM917 325.0h1v2h-1zM927 320.5h1v2h-1z"/>
<!-- channel marker -->
<path d="M0.7 313.7h16.5l5.3 10.2l-5.3 10.2h-16.5z" fill="#000" stroke="#e4e000" stroke-width="1.4"/>
<text x="9.6" y="330.5" fill="#e4e000" style="font-family:'Liberation Sans',sans-serif;font-size:19px;text-anchor:middle">2</text>
<!-- bottom -->
<rect x="0" y="622.5" width="383" height="97.5" fill="#5cb0dc"/>
<rect x="0" y="669" width="383" height="5" fill="#84b8c8"/>
<rect x="0" y="716" width="383" height="4" fill="#78b4cc"/>
<rect x="2" y="646" width="248" height="3" fill="#0c2a3a"/>
<rect x="2" y="623.5" width="247" height="23" rx="4" fill="#000"/>
<rect x="2" y="648.2" width="247" height="22" rx="4" fill="#000"/>
<rect x="253.5" y="623.5" width="126.5" height="46.5" rx="4.5" fill="#000"/>
<rect x="2" y="673.3" width="378" height="43.5" rx="4" fill="#000"/>
<circle cx="12.2" cy="636" r="9.3" fill="#e41010"/>
<text x="12.2" y="642.3" class="n" style="fill:#200000">1</text>
<text x="21" y="644" fill="#dc1c1c" class="k">50.0mV-</text>
<text x="125.5" y="644" fill="#dc1c1c" class="k">2.00div</text>
<circle cx="12.3" cy="659.8" r="9.5" fill="#e8e010"/>
<text x="12.3" y="666" class="n">2</text>
<text x="21" y="668" fill="#e4dc2c" class="k">2V-</text>
<text x="126" y="668" fill="#e4dc2c" class="k">0.00div</text>
<text x="256" y="643" fill="#dcdcdc" class="k">(1.25KS/s)</text>
<text x="260.5" y="667" fill="#dcdcdc" class="k">Depth:10K</text>
<circle cx="11.7" cy="683.3" r="9.5" fill="#e8e010"/>
<text x="11.7" y="689.5" class="n">2</text>
<circle cx="11.7" cy="706.8" r="9.5" fill="#e8e010"/>
<text x="11.7" y="713" class="n">2</text>
<text x="24" y="691" fill="#e4dc2c" class="k">F:  ?</text>
<text x="24" y="714" fill="#e4dc2c" class="k">+D:89.3%</text>
<circle cx="202" cy="683.3" r="9.5" fill="#e8e010"/>
<text x="202" y="689.5" class="n">2</text>
<circle cx="202" cy="706.8" r="9.5" fill="#e8e010"/>
<text x="202" y="713" class="n">2</text>
<text x="216" y="691" fill="#e4dc2c" class="k">Vk:2.344v</text>
<text x="216" y="714" fill="#e4dc2c" class="k">V:2.144v</text>
<!-- menu area -->
<rect x="383" y="645" width="572" height="71" fill="#0462a2"/>
<rect x="380" y="622.5" width="3" height="97.5" fill="#78b8d8"/>
<rect x="383" y="645" width="4" height="75" fill="#0672c8"/>
<rect x="383" y="716" width="577" height="4" fill="#0874cc"/>
<rect x="955" y="645" width="5" height="75" fill="#0874cc"/>
<rect x="383.3" y="623.6" width="118.7" height="21.9" rx="11" fill="#000"/>
<text x="399" y="641" fill="#e0e0e0" class="k">M:400ms</text>
<rect x="797.5" y="623.5" width="154.5" height="21.5" rx="10.7" fill="#000"/>
<circle cx="810.6" cy="634.2" r="9.6" fill="#e8e010"/>
<text x="810.6" y="640.5" class="n">2</text>
<path d="M822 642.7h10.5l5.5-16h8" fill="none" stroke="#e0e0e0" stroke-width="1.5"/>
<text x="848" y="642" fill="#e0e0e0" class="k">0.00mV</text>
<rect x="387" y="649" width="108" height="67" rx="3" fill="#003c88"/>
<rect x="386.5" y="648.6" width="107" height="65.6" rx="3" fill="#4aa4ec"/>
<rect x="387.5" y="650.6" width="106" height="63.4" rx="2" fill="#0a80e4"/>
<text x="414" y="676" fill="#081c50" stroke="#081c50" stroke-width="0.4">Type</text>
<rect x="409" y="685.3" width="60" height="24.2" fill="#e4e4e4"/>
<text x="410" y="704" fill="#080808" stroke="#080808" stroke-width="0.3">Image</text>
<rect x="717.5" y="649.5" width="107" height="66.5" rx="3" fill="#003c88"/>
<rect x="717" y="649.2" width="105.5" height="65" rx="3" fill="#4aa4ec"/>
<rect x="718" y="651.3" width="104.5" height="62.7" rx="2" fill="#0a80e4"/>
<text x="744" y="689" fill="#081c50" stroke="#081c50" stroke-width="0.4">Save</text>
</svg>
</body></html>
